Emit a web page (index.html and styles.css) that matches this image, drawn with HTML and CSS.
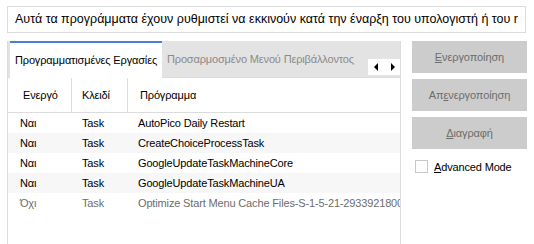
FILE: index.html
```html
<!DOCTYPE html>
<html lang="el">
<head>
    <meta charset="UTF-8">
    <title>Εκκίνηση</title>
    <link rel="stylesheet" href="styles.css">
</head>
<body>
    <div class="intro">Αυτά τα προγράμματα έχουν ρυθμιστεί να εκκινούν κατά την έναρξη του υπολογιστή ή του r</div>

    <main class="layout">
        <section class="panel">
            <div class="tabs">
                <div class="tab active">Προγραμματισμένες Εργασίες</div>
                <div class="tab">Προσαρμοσμένο Μενού Περιβάλλοντος</div>
                <div class="tab-scroll">
                    <svg width="5" height="8" viewBox="0 0 5 8"><path d="M4 0 L0 4 L4 8 Z" fill="#000"/></svg>
                    <svg width="5" height="8" viewBox="0 0 5 8"><path d="M1 0 L5 4 L1 8 Z" fill="#000"/></svg>
                </div>
            </div>

            <div class="grid">
                <div class="row head">
                    <div class="c1">Ενεργό</div>
                    <div class="c2">Κλειδί</div>
                    <div class="c3">Πρόγραμμα</div>
                </div>
                <div class="row">
                    <div class="c1">Ναι</div><div class="c2">Task</div><div class="c3">AutoPico Daily Restart</div>
                </div>
                <div class="row alt">
                    <div class="c1">Ναι</div><div class="c2">Task</div><div class="c3">CreateChoiceProcessTask</div>
                </div>
                <div class="row">
                    <div class="c1">Ναι</div><div class="c2">Task</div><div class="c3">GoogleUpdateTaskMachineCore</div>
                </div>
                <div class="row alt">
                    <div class="c1">Ναι</div><div class="c2">Task</div><div class="c3">GoogleUpdateTaskMachineUA</div>
                </div>
                <div class="row off">
                    <div class="c1">Όχι</div><div class="c2">Task</div><div class="c3">Optimize Start Menu Cache Files-S-1-5-21-2933921800</div>
                </div>
            </div>
        </section>

        <aside class="actions">
            <button class="btn" disabled><u>Ε</u>νεργοποίηση</button>
            <button class="btn" disabled>Απ<u>ε</u>νεργοποίηση</button>
            <button class="btn" disabled><u>Δ</u>ιαγραφή</button>
            <label class="check">
                <span class="box"></span>
                <span><u>A</u>dvanced Mode</span>
            </label>
        </aside>
    </main>
</body>
</html>
```

FILE: styles.css
```css
:root {
--border: #dcdcdc;
--strip: #e3e3e3;
--blue: #4a7fd9;
--grey-text: #6d6d6d;
--btn: #cccccc;
}

*,
*::before,
*::after {
box-sizing: border-box;
}

body {
font-family: "Liberation Sans", Arial, sans-serif;
font-size: 11px;
letter-spacing: -0.15px;
color: #000;
background-color: #ffffff;
margin: 0;
height: 244px;
overflow: hidden;
}

.intro {
margin: 6px 8px 0 7px;
height: 27px;
border: 1px solid var(--border);
padding: 0 7px;
font-size: 12.5px;
letter-spacing: 0;
line-height: 25px;
white-space: nowrap;
overflow: hidden;
}

.layout {
display: flex;
gap: 11px;
margin: 8px 7px 0 7px;
}

.panel {
width: 394px;
height: 210px;
border-left: 1px solid var(--border);
border-right: 1px solid var(--border);
}

.tabs {
display: flex;
align-items: flex-end;
height: 37px;
padding-left: 2px;
background-color: var(--strip);
border-bottom: 1px solid var(--border);
}

.tab {
height: 36px;
line-height: 37px;
padding: 0 5px;
color: #8a8a8a;
white-space: nowrap;
}

.tab.active {
width: 152px;
background-color: #ffffff;
color: #000;
border-top: 2px solid var(--blue);
line-height: 35px;
height: 37px;
margin-bottom: -1px;
}

.tab-scroll {
display: flex;
align-items: center;
justify-content: space-around;
margin-left: auto;
margin-bottom: 2px;
width: 32px;
height: 16px;
background-color: #ffffff;
}

.grid {
display: flex;
flex-direction: column;
}

.row {
display: flex;
height: 20px;
line-height: 20px;
white-space: nowrap;
}

.row > div {
overflow: hidden;
}

.c1 {
width: 64px;
padding-left: 12px;
}

.c2 {
width: 56px;
padding-left: 10px;
}

.c3 {
flex: 1;
padding-left: 10px;
}

.row.head {
height: 35px;
line-height: 34px;
border-bottom: 1px solid var(--border);
}

.row.head .c1 {
padding-left: 15px;
border-right: 1px solid var(--border);
}

.row.head .c2 {
border-right: 1px solid var(--border);
}

.row.head .c3 {
padding-left: 12px;
}

.row.alt {
background-color: #f7f7f7;
}

.row.off {
color: var(--grey-text);
}

.actions {
display: flex;
flex-direction: column;
gap: 6px;
width: 116px;
}

.btn {
height: 32px;
border: none;
background-color: var(--btn);
color: var(--grey-text);
font-family: inherit;
font-size: 11px;
letter-spacing: -0.1px;
padding: 0;
}

.check {
display: flex;
align-items: center;
gap: 6px;
margin: 5px 0 0 3px;
font-size: 11px;
}

.box {
width: 13px;
height: 13px;
border: 1px solid #c8c8c8;
background: #fff;
}
```
